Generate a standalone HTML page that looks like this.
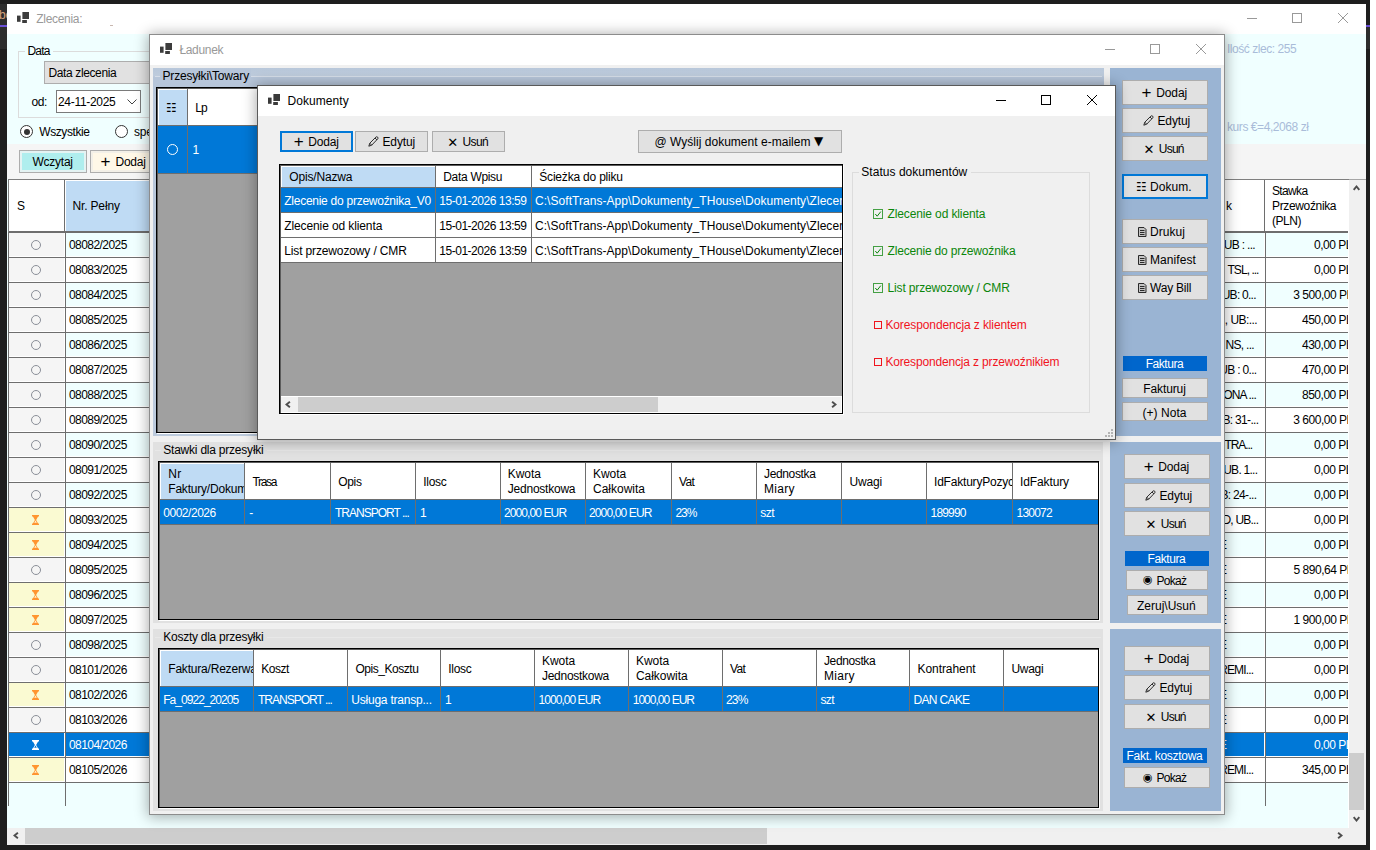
<!DOCTYPE html>
<html lang="pl"><head><meta charset="utf-8"><title>Zlecenia</title>
<style>
*{box-sizing:border-box;margin:0;padding:0}
html,body{width:1376px;height:850px;overflow:hidden;background:#1e1e1e}
body{position:relative;font-family:"Liberation Sans","DejaVu Sans",sans-serif;font-size:12px;color:#000}
.a{position:absolute;white-space:nowrap;overflow:hidden}
.v{position:absolute;white-space:nowrap;overflow:visible}
.win{position:absolute;background:#f0f0f0;overflow:hidden}
.sh{position:absolute;box-shadow:0 1px 13px 1px rgba(0,0,0,.33)}
.tb{position:absolute;left:0;top:0;right:0;height:30px;background:#fff}
.btn{position:absolute;background:#e1e1e1;border:1px solid #adadad;overflow:hidden}
.btn.f{border:2px solid #0078d7}
.lbl{position:absolute;background:#0066cc;color:#fff;overflow:hidden}
.grid{position:absolute;background:#a0a0a0;border:1px solid #000;box-shadow:inset 1px 1px 0 #5c5c5c,1px 1px 0 #fff;overflow:hidden}
.hc{position:absolute;background:#fff;border-right:1px solid #6e6e6e;border-bottom:1px solid #6e6e6e;box-shadow:inset 1px 1px 0 #fff;overflow:hidden}
.hc.s{background:#bfdbf4}
.c{position:absolute;background:#fff;border-right:1px solid #6e6e6e;border-bottom:1px solid #6e6e6e;overflow:hidden}
.z{position:absolute;border-left:1px solid #6e6e6e;border-top:1px solid #6e6e6e;box-shadow:inset -1px -1px 0 #fff;overflow:hidden}
.sel{background:#0078d7;color:#fff}
.ic{font-family:"DejaVu Sans",sans-serif}
svg{position:absolute;overflow:visible}
</style></head>
<body>
<div class="a" style="left:1370px;top:0px;width:6px;height:850px;background:#fff"></div>
<div class="a" style="left:0px;top:4px;width:7px;height:45px;background:#2d2d2d"></div>
<div class="a" style="left:0px;top:25px;width:7px;height:2px;background:#6a4fd6"></div>
<div class="a" style="left:1366px;top:25px;width:4px;height:2px;background:#6a4fd6"></div>
<div class="a" style="left:1366px;top:27px;width:4px;height:22px;background:#2d2d2d"></div>
<div class="a" style="left:-1px;top:7px;height:16px;line-height:16px;letter-spacing:-0.2px;width:8px;color:#d6a27c">bo</div>
<div class="win" style="left:7px;top:4px;width:1359px;height:841px;background:#f0ffff">
<div class="a" style="left:0px;top:0px;width:1359px;height:30px;background:#fff"></div>
<svg style="left:10px;top:8px" width="14" height="13" viewBox="0 0 14 13"><rect x="0" y="3.6" width="3.6" height="6.2" fill="#3c3c3c"/><rect x="5.4" y="0" width="6.6" height="7" fill="#3c3c3c"/><rect x="5.2" y="8" width="4.7" height="3" fill="#3c3c3c"/></svg>
<div class="v" style="left:29.25px;top:7px;height:16px;line-height:16px;letter-spacing:-0.31px;color:#999">Zlecenia:</div>
<div class="a" style="left:103px;top:21px;width:3px;height:1px;background:#c9b8b0"></div>
<svg style="left:1240px;top:8px" width="102" height="12" viewBox="0 0 102 12"><path d="M0 6.5H10" stroke="#999" stroke-width="1" fill="none"/><rect x="45.5" y="1.5" width="9" height="9" stroke="#999" stroke-width="1" fill="none"/><path d="M91 1L101 11M101 1L91 11" stroke="#999" stroke-width="1" fill="none"/></svg>
<div class="a" style="left:0px;top:140px;width:1359px;height:35px;background:#f5f5f5"></div>
<div class="a" style="left:11px;top:47px;width:400px;height:67px;border:1px solid #dcdcdc"></div>
<div class="a" style="left:18px;top:41px;width:28px;height:12px;background:#f0ffff"></div>
<div class="v" style="left:20.5px;top:39px;height:16px;line-height:16px;letter-spacing:-0.83px;">Data</div>
<div class="a" style="left:37px;top:57px;width:300px;height:23px;background:#e1e1e1;border:1px solid #adadad"></div>
<div class="v" style="left:41.5px;top:61px;height:16px;line-height:16px;letter-spacing:-0.38px;">Data zlecenia</div>
<div class="v" style="left:24.5px;top:90px;height:16px;line-height:16px;letter-spacing:-0.38px;">od:</div>
<div class="a" style="left:49px;top:86px;width:85px;height:23px;background:#fff;border:1px solid #7a7a7a"></div>
<div class="v" style="left:51px;top:90px;height:16px;line-height:16px;letter-spacing:-0.31px;">24-11-2025</div>
<svg style="left:120px;top:95px" width="10" height="6" viewBox="0 0 10 6"><path d="M0.5 0.5L5 5L9.5 0.5" stroke="#444" stroke-width="1" fill="none"/></svg>
<div class="a" style="left:13px;top:121px;width:13px;height:13px;border:1px solid #333;border-radius:50%;background:#fff"></div>
<div class="a" style="left:108px;top:121px;width:13px;height:13px;border:1px solid #333;border-radius:50%;background:#fff"></div>
<div class="a" style="left:16.5px;top:124.5px;width:6px;height:6px;background:#333;border-radius:50%"></div>
<div class="v" style="left:32.25px;top:120px;height:16px;line-height:16px;letter-spacing:-0.41px;">Wszystkie</div>
<div class="v" style="left:127px;top:120px;height:16px;line-height:16px;letter-spacing:-0.2px;">specjalne</div>
<div class="a" style="left:12px;top:146px;width:68px;height:23px;background:#afeeee;border:1px solid #adadad;box-shadow:inset 0 0 0 2px #e4f3f3"></div>
<div class="v" style="left:25.5px;top:150px;height:16px;line-height:16px;letter-spacing:-0.25px;">Wczytaj</div>
<div class="a" style="left:83px;top:146px;width:80px;height:23px;background:#fff8e7;border:1px solid #adadad;box-shadow:inset 0 0 0 2px #f3f0e8"></div>
<div class="v" style="left:93.55px;top:147.6px;height:20px;line-height:20px;font-size:17px;color:#000">+</div>
<div class="v" style="left:108.5px;top:150px;height:16px;line-height:16px;letter-spacing:-0.25px;">Dodaj</div>
<div class="v" style="left:1220px;top:37px;height:16px;line-height:16px;letter-spacing:-0.46px;color:#a9bcd9">Ilość zlec: 255</div>
<div class="v" style="left:1220px;top:115px;height:16px;line-height:16px;letter-spacing:-0.43px;color:#a9bcd9">kurs €=4,2068 zł</div>
<div class="a" style="left:1px;top:175px;width:1341px;height:649px;background:#f0ffff;border-top:1px solid #7f7f7f"></div>
<div class="a" style="left:1px;top:175px;width:1px;height:53px;background:#7f7f7f"></div>
<div class="a" style="left:1px;top:175px;width:1341px;height:649px;">
<div class="hc" style="left:1px;top:1px;width:56px;height:52px;"></div>
<div class="v" style="left:9px;top:19px;height:16px;line-height:16px;letter-spacing:-0.2px;">S</div>
<div class="hc s" style="left:57px;top:1px;width:1100px;height:52px;"></div>
<div class="v" style="left:64.5px;top:19px;height:16px;line-height:16px;letter-spacing:-0.16px;">Nr. Pełny</div>
<div class="hc" style="left:1157px;top:1px;width:100px;height:52px;"></div>
<div class="v" style="left:1218px;top:19px;height:16px;line-height:16px;letter-spacing:-0.2px;">k</div>
<div class="hc" style="left:1257px;top:1px;width:120px;height:52px;"></div>
<div class="v" style="left:1264px;top:4px;height:16px;line-height:16px;letter-spacing:-0.65px;">Stawka</div>
<div class="v" style="left:1264px;top:19px;height:16px;line-height:16px;letter-spacing:-0.35px;">Przewoźnika</div>
<div class="v" style="left:1264px;top:34px;height:16px;line-height:16px;letter-spacing:-0.44px;">(PLN)</div>
<div class="z" style="left:0px;top:53px;width:57px;height:25px;background:#f5f5f5"></div>
<div class="a" style="left:23px;top:61px;width:10px;height:10px;border:1px solid #8a8f98;border-radius:50%"></div>
<div class="z" style="left:57px;top:53px;width:1100px;height:25px;background:#f0ffff"></div>
<div class="v" style="left:61px;top:58px;height:16px;line-height:16px;letter-spacing:-0.56px;color:#000">08082/2025</div>
<div class="z" style="left:1157px;top:53px;width:100px;height:25px;background:#f0ffff"></div>
<div class="v" style="left:1215.78px;top:58px;height:16px;line-height:16px;letter-spacing:-0.68px;color:#000">UB : ...</div>
<div class="z" style="left:1257px;top:53px;width:120px;height:25px;background:#f0ffff"></div>
<div class="v" style="left:1306px;top:58px;height:16px;line-height:16px;letter-spacing:-0.5px;color:#000">0,00 PLN</div>
<div class="z" style="left:0px;top:78px;width:57px;height:25px;background:#f5f5f5"></div>
<div class="a" style="left:23px;top:86px;width:10px;height:10px;border:1px solid #8a8f98;border-radius:50%"></div>
<div class="z" style="left:57px;top:78px;width:1100px;height:25px;background:#fff"></div>
<div class="v" style="left:61px;top:83px;height:16px;line-height:16px;letter-spacing:-0.56px;color:#000">08083/2025</div>
<div class="z" style="left:1157px;top:78px;width:100px;height:25px;background:#fff"></div>
<div class="v" style="left:1219.5px;top:83px;height:16px;line-height:16px;letter-spacing:-0.96px;color:#000">TSL, ...</div>
<div class="z" style="left:1257px;top:78px;width:120px;height:25px;background:#fff"></div>
<div class="v" style="left:1306px;top:83px;height:16px;line-height:16px;letter-spacing:-0.5px;color:#000">0,00 PLN</div>
<div class="z" style="left:0px;top:103px;width:57px;height:25px;background:#f5f5f5"></div>
<div class="a" style="left:23px;top:111px;width:10px;height:10px;border:1px solid #8a8f98;border-radius:50%"></div>
<div class="z" style="left:57px;top:103px;width:1100px;height:25px;background:#f0ffff"></div>
<div class="v" style="left:61px;top:108px;height:16px;line-height:16px;letter-spacing:-0.56px;color:#000">08084/2025</div>
<div class="z" style="left:1157px;top:103px;width:100px;height:25px;background:#f0ffff"></div>
<div class="v" style="left:1213.7px;top:108px;height:16px;line-height:16px;letter-spacing:-0.74px;color:#000">UB: 0...</div>
<div class="z" style="left:1257px;top:103px;width:120px;height:25px;background:#f0ffff"></div>
<div class="v" style="left:1285.25px;top:108px;height:16px;line-height:16px;letter-spacing:-0.47px;color:#000">3 500,00 PLN</div>
<div class="z" style="left:0px;top:128px;width:57px;height:25px;background:#f5f5f5"></div>
<div class="a" style="left:23px;top:136px;width:10px;height:10px;border:1px solid #8a8f98;border-radius:50%"></div>
<div class="z" style="left:57px;top:128px;width:1100px;height:25px;background:#fff"></div>
<div class="v" style="left:61px;top:133px;height:16px;line-height:16px;letter-spacing:-0.56px;color:#000">08085/2025</div>
<div class="z" style="left:1157px;top:128px;width:100px;height:25px;background:#fff"></div>
<div class="v" style="left:1216.8px;top:133px;height:16px;line-height:16px;letter-spacing:-0.54px;color:#000">, UB:...</div>
<div class="z" style="left:1257px;top:128px;width:120px;height:25px;background:#fff"></div>
<div class="v" style="left:1294px;top:133px;height:16px;line-height:16px;letter-spacing:-0.49px;color:#000">450,00 PLN</div>
<div class="z" style="left:0px;top:153px;width:57px;height:25px;background:#f5f5f5"></div>
<div class="a" style="left:23px;top:161px;width:10px;height:10px;border:1px solid #8a8f98;border-radius:50%"></div>
<div class="z" style="left:57px;top:153px;width:1100px;height:25px;background:#f0ffff"></div>
<div class="v" style="left:61px;top:158px;height:16px;line-height:16px;letter-spacing:-0.56px;color:#000">08086/2025</div>
<div class="z" style="left:1157px;top:153px;width:100px;height:25px;background:#f0ffff"></div>
<div class="v" style="left:1217.57px;top:158px;height:16px;line-height:16px;letter-spacing:-0.72px;color:#000">NS, ...</div>
<div class="z" style="left:1257px;top:153px;width:120px;height:25px;background:#f0ffff"></div>
<div class="v" style="left:1294px;top:158px;height:16px;line-height:16px;letter-spacing:-0.49px;color:#000">430,00 PLN</div>
<div class="z" style="left:0px;top:178px;width:57px;height:25px;background:#f5f5f5"></div>
<div class="a" style="left:23px;top:186px;width:10px;height:10px;border:1px solid #8a8f98;border-radius:50%"></div>
<div class="z" style="left:57px;top:178px;width:1100px;height:25px;background:#fff"></div>
<div class="v" style="left:61px;top:183px;height:16px;line-height:16px;letter-spacing:-0.56px;color:#000">08087/2025</div>
<div class="z" style="left:1157px;top:178px;width:100px;height:25px;background:#fff"></div>
<div class="v" style="left:1211.37px;top:183px;height:16px;line-height:16px;letter-spacing:-0.7px;color:#000">UB : 0...</div>
<div class="z" style="left:1257px;top:178px;width:120px;height:25px;background:#fff"></div>
<div class="v" style="left:1294px;top:183px;height:16px;line-height:16px;letter-spacing:-0.49px;color:#000">470,00 PLN</div>
<div class="z" style="left:0px;top:203px;width:57px;height:25px;background:#f5f5f5"></div>
<div class="a" style="left:23px;top:211px;width:10px;height:10px;border:1px solid #8a8f98;border-radius:50%"></div>
<div class="z" style="left:57px;top:203px;width:1100px;height:25px;background:#f0ffff"></div>
<div class="v" style="left:61px;top:208px;height:16px;line-height:16px;letter-spacing:-0.56px;color:#000">08088/2025</div>
<div class="z" style="left:1157px;top:203px;width:100px;height:25px;background:#f0ffff"></div>
<div class="v" style="left:1215.29px;top:208px;height:16px;line-height:16px;letter-spacing:-0.84px;color:#000">ONA ...</div>
<div class="z" style="left:1257px;top:203px;width:120px;height:25px;background:#f0ffff"></div>
<div class="v" style="left:1294px;top:208px;height:16px;line-height:16px;letter-spacing:-0.49px;color:#000">850,00 PLN</div>
<div class="z" style="left:0px;top:228px;width:57px;height:25px;background:#f5f5f5"></div>
<div class="a" style="left:23px;top:236px;width:10px;height:10px;border:1px solid #8a8f98;border-radius:50%"></div>
<div class="z" style="left:57px;top:228px;width:1100px;height:25px;background:#fff"></div>
<div class="v" style="left:61px;top:233px;height:16px;line-height:16px;letter-spacing:-0.56px;color:#000">08089/2025</div>
<div class="z" style="left:1157px;top:228px;width:100px;height:25px;background:#fff"></div>
<div class="v" style="left:1214.46px;top:233px;height:16px;line-height:16px;letter-spacing:-0.68px;color:#000">B: 31-...</div>
<div class="z" style="left:1257px;top:228px;width:120px;height:25px;background:#fff"></div>
<div class="v" style="left:1285.25px;top:233px;height:16px;line-height:16px;letter-spacing:-0.47px;color:#000">3 600,00 PLN</div>
<div class="z" style="left:0px;top:253px;width:57px;height:25px;background:#f5f5f5"></div>
<div class="a" style="left:23px;top:261px;width:10px;height:10px;border:1px solid #8a8f98;border-radius:50%"></div>
<div class="z" style="left:57px;top:253px;width:1100px;height:25px;background:#f0ffff"></div>
<div class="v" style="left:61px;top:258px;height:16px;line-height:16px;letter-spacing:-0.56px;color:#000">08090/2025</div>
<div class="z" style="left:1157px;top:253px;width:100px;height:25px;background:#f0ffff"></div>
<div class="v" style="left:1216.5px;top:258px;height:16px;line-height:16px;letter-spacing:-1.1px;color:#000">TRA...</div>
<div class="z" style="left:1257px;top:253px;width:120px;height:25px;background:#f0ffff"></div>
<div class="v" style="left:1306px;top:258px;height:16px;line-height:16px;letter-spacing:-0.5px;color:#000">0,00 PLN</div>
<div class="z" style="left:0px;top:278px;width:57px;height:25px;background:#f5f5f5"></div>
<div class="a" style="left:23px;top:286px;width:10px;height:10px;border:1px solid #8a8f98;border-radius:50%"></div>
<div class="z" style="left:57px;top:278px;width:1100px;height:25px;background:#fff"></div>
<div class="v" style="left:61px;top:283px;height:16px;line-height:16px;letter-spacing:-0.56px;color:#000">08091/2025</div>
<div class="z" style="left:1157px;top:278px;width:100px;height:25px;background:#fff"></div>
<div class="v" style="left:1215.2px;top:283px;height:16px;line-height:16px;letter-spacing:-0.74px;color:#000">UB. 1...</div>
<div class="z" style="left:1257px;top:278px;width:120px;height:25px;background:#fff"></div>
<div class="v" style="left:1306px;top:283px;height:16px;line-height:16px;letter-spacing:-0.5px;color:#000">0,00 PLN</div>
<div class="z" style="left:0px;top:303px;width:57px;height:25px;background:#f5f5f5"></div>
<div class="a" style="left:23px;top:311px;width:10px;height:10px;border:1px solid #8a8f98;border-radius:50%"></div>
<div class="z" style="left:57px;top:303px;width:1100px;height:25px;background:#f0ffff"></div>
<div class="v" style="left:61px;top:308px;height:16px;line-height:16px;letter-spacing:-0.56px;color:#000">08092/2025</div>
<div class="z" style="left:1157px;top:303px;width:100px;height:25px;background:#f0ffff"></div>
<div class="v" style="left:1212.46px;top:308px;height:16px;line-height:16px;letter-spacing:-0.68px;color:#000">B: 24-...</div>
<div class="z" style="left:1257px;top:303px;width:120px;height:25px;background:#f0ffff"></div>
<div class="v" style="left:1306px;top:308px;height:16px;line-height:16px;letter-spacing:-0.5px;color:#000">0,00 PLN</div>
<div class="z" style="left:0px;top:328px;width:57px;height:25px;background:#fafad2"></div>
<svg style="left:24px;top:336px" width="7" height="10" viewBox="0 0 7 10"><path d="M0 0H7V1.4H0Z M0 8.6H7V10H0Z M0.9 1.4H6.1L4.1 5L6.1 8.6H0.9L2.9 5Z" fill="#ff9530"/><path d="M2.2 7.8L3.5 5.6L4.8 7.8Z" fill="#fff4d6"/></svg>
<div class="z" style="left:57px;top:328px;width:1100px;height:25px;background:#fff"></div>
<div class="v" style="left:61px;top:333px;height:16px;line-height:16px;letter-spacing:-0.56px;color:#000">08093/2025</div>
<div class="z" style="left:1157px;top:328px;width:100px;height:25px;background:#fff"></div>
<div class="v" style="left:1214.46px;top:333px;height:16px;line-height:16px;letter-spacing:-0.78px;color:#000">D, UB...</div>
<div class="z" style="left:1257px;top:328px;width:120px;height:25px;background:#fff"></div>
<div class="v" style="left:1306px;top:333px;height:16px;line-height:16px;letter-spacing:-0.5px;color:#000">0,00 PLN</div>
<div class="z" style="left:0px;top:353px;width:57px;height:25px;background:#fafad2"></div>
<svg style="left:24px;top:361px" width="7" height="10" viewBox="0 0 7 10"><path d="M0 0H7V1.4H0Z M0 8.6H7V10H0Z M0.9 1.4H6.1L4.1 5L6.1 8.6H0.9L2.9 5Z" fill="#ff9530"/><path d="M2.2 7.8L3.5 5.6L4.8 7.8Z" fill="#fff4d6"/></svg>
<div class="z" style="left:57px;top:353px;width:1100px;height:25px;background:#f0ffff"></div>
<div class="v" style="left:61px;top:358px;height:16px;line-height:16px;letter-spacing:-0.56px;color:#000">08094/2025</div>
<div class="z" style="left:1157px;top:353px;width:100px;height:25px;background:#f0ffff"></div>
<div class="v" style="left:1211px;top:358px;height:16px;line-height:16px;letter-spacing:-0.2px;color:#000">E</div>
<div class="z" style="left:1257px;top:353px;width:120px;height:25px;background:#f0ffff"></div>
<div class="v" style="left:1306px;top:358px;height:16px;line-height:16px;letter-spacing:-0.5px;color:#000">0,00 PLN</div>
<div class="z" style="left:0px;top:378px;width:57px;height:25px;background:#f5f5f5"></div>
<div class="a" style="left:23px;top:386px;width:10px;height:10px;border:1px solid #8a8f98;border-radius:50%"></div>
<div class="z" style="left:57px;top:378px;width:1100px;height:25px;background:#fff"></div>
<div class="v" style="left:61px;top:383px;height:16px;line-height:16px;letter-spacing:-0.56px;color:#000">08095/2025</div>
<div class="z" style="left:1157px;top:378px;width:100px;height:25px;background:#fff"></div>
<div class="v" style="left:1211px;top:383px;height:16px;line-height:16px;letter-spacing:-0.2px;color:#000">E</div>
<div class="z" style="left:1257px;top:378px;width:120px;height:25px;background:#fff"></div>
<div class="v" style="left:1285.5px;top:383px;height:16px;line-height:16px;letter-spacing:-0.47px;color:#000">5 890,64 PLN</div>
<div class="z" style="left:0px;top:403px;width:57px;height:25px;background:#fafad2"></div>
<svg style="left:24px;top:411px" width="7" height="10" viewBox="0 0 7 10"><path d="M0 0H7V1.4H0Z M0 8.6H7V10H0Z M0.9 1.4H6.1L4.1 5L6.1 8.6H0.9L2.9 5Z" fill="#ff9530"/><path d="M2.2 7.8L3.5 5.6L4.8 7.8Z" fill="#fff4d6"/></svg>
<div class="z" style="left:57px;top:403px;width:1100px;height:25px;background:#f0ffff"></div>
<div class="v" style="left:61px;top:408px;height:16px;line-height:16px;letter-spacing:-0.56px;color:#000">08096/2025</div>
<div class="z" style="left:1157px;top:403px;width:100px;height:25px;background:#f0ffff"></div>
<div class="v" style="left:1211px;top:408px;height:16px;line-height:16px;letter-spacing:-0.2px;color:#000">E</div>
<div class="z" style="left:1257px;top:403px;width:120px;height:25px;background:#f0ffff"></div>
<div class="v" style="left:1306px;top:408px;height:16px;line-height:16px;letter-spacing:-0.5px;color:#000">0,00 PLN</div>
<div class="z" style="left:0px;top:428px;width:57px;height:25px;background:#fafad2"></div>
<svg style="left:24px;top:436px" width="7" height="10" viewBox="0 0 7 10"><path d="M0 0H7V1.4H0Z M0 8.6H7V10H0Z M0.9 1.4H6.1L4.1 5L6.1 8.6H0.9L2.9 5Z" fill="#ff9530"/><path d="M2.2 7.8L3.5 5.6L4.8 7.8Z" fill="#fff4d6"/></svg>
<div class="z" style="left:57px;top:428px;width:1100px;height:25px;background:#fff"></div>
<div class="v" style="left:61px;top:433px;height:16px;line-height:16px;letter-spacing:-0.56px;color:#000">08097/2025</div>
<div class="z" style="left:1157px;top:428px;width:100px;height:25px;background:#fff"></div>
<div class="v" style="left:1211px;top:433px;height:16px;line-height:16px;letter-spacing:-0.2px;color:#000">E</div>
<div class="z" style="left:1257px;top:428px;width:120px;height:25px;background:#fff"></div>
<div class="v" style="left:1285.5px;top:433px;height:16px;line-height:16px;letter-spacing:-0.47px;color:#000">1 900,00 PLN</div>
<div class="z" style="left:0px;top:453px;width:57px;height:25px;background:#f5f5f5"></div>
<div class="a" style="left:23px;top:461px;width:10px;height:10px;border:1px solid #8a8f98;border-radius:50%"></div>
<div class="z" style="left:57px;top:453px;width:1100px;height:25px;background:#f0ffff"></div>
<div class="v" style="left:61px;top:458px;height:16px;line-height:16px;letter-spacing:-0.56px;color:#000">08098/2025</div>
<div class="z" style="left:1157px;top:453px;width:100px;height:25px;background:#f0ffff"></div>
<div class="v" style="left:1211px;top:458px;height:16px;line-height:16px;letter-spacing:-0.2px;color:#000">E</div>
<div class="z" style="left:1257px;top:453px;width:120px;height:25px;background:#f0ffff"></div>
<div class="v" style="left:1306px;top:458px;height:16px;line-height:16px;letter-spacing:-0.5px;color:#000">0,00 PLN</div>
<div class="z" style="left:0px;top:478px;width:57px;height:25px;background:#f5f5f5"></div>
<div class="a" style="left:23px;top:486px;width:10px;height:10px;border:1px solid #8a8f98;border-radius:50%"></div>
<div class="z" style="left:57px;top:478px;width:1100px;height:25px;background:#fff"></div>
<div class="v" style="left:61px;top:483px;height:16px;line-height:16px;letter-spacing:-0.56px;color:#000">08101/2026</div>
<div class="z" style="left:1157px;top:478px;width:100px;height:25px;background:#fff"></div>
<div class="v" style="left:1211.2px;top:483px;height:16px;line-height:16px;letter-spacing:-0.87px;color:#000">REMI...</div>
<div class="z" style="left:1257px;top:478px;width:120px;height:25px;background:#fff"></div>
<div class="v" style="left:1306px;top:483px;height:16px;line-height:16px;letter-spacing:-0.5px;color:#000">0,00 PLN</div>
<div class="z" style="left:0px;top:503px;width:57px;height:25px;background:#fafad2"></div>
<svg style="left:24px;top:511px" width="7" height="10" viewBox="0 0 7 10"><path d="M0 0H7V1.4H0Z M0 8.6H7V10H0Z M0.9 1.4H6.1L4.1 5L6.1 8.6H0.9L2.9 5Z" fill="#ff9530"/><path d="M2.2 7.8L3.5 5.6L4.8 7.8Z" fill="#fff4d6"/></svg>
<div class="z" style="left:57px;top:503px;width:1100px;height:25px;background:#f0ffff"></div>
<div class="v" style="left:61px;top:508px;height:16px;line-height:16px;letter-spacing:-0.56px;color:#000">08102/2026</div>
<div class="z" style="left:1157px;top:503px;width:100px;height:25px;background:#f0ffff"></div>
<div class="v" style="left:1211px;top:508px;height:16px;line-height:16px;letter-spacing:-0.2px;color:#000">E</div>
<div class="z" style="left:1257px;top:503px;width:120px;height:25px;background:#f0ffff"></div>
<div class="v" style="left:1306px;top:508px;height:16px;line-height:16px;letter-spacing:-0.5px;color:#000">0,00 PLN</div>
<div class="z" style="left:0px;top:528px;width:57px;height:25px;background:#f5f5f5"></div>
<div class="a" style="left:23px;top:536px;width:10px;height:10px;border:1px solid #8a8f98;border-radius:50%"></div>
<div class="z" style="left:57px;top:528px;width:1100px;height:25px;background:#fff"></div>
<div class="v" style="left:61px;top:533px;height:16px;line-height:16px;letter-spacing:-0.56px;color:#000">08103/2026</div>
<div class="z" style="left:1157px;top:528px;width:100px;height:25px;background:#fff"></div>
<div class="v" style="left:1211px;top:533px;height:16px;line-height:16px;letter-spacing:-0.2px;color:#000">E</div>
<div class="z" style="left:1257px;top:528px;width:120px;height:25px;background:#fff"></div>
<div class="v" style="left:1306px;top:533px;height:16px;line-height:16px;letter-spacing:-0.5px;color:#000">0,00 PLN</div>
<div class="z" style="left:0px;top:553px;width:57px;height:25px;background:#0078d7"></div>
<svg style="left:24px;top:561px" width="7" height="10" viewBox="0 0 7 10"><path d="M0 0H7V1.4H0Z M0 8.6H7V10H0Z M0.9 1.4H6.1L4.1 5L6.1 8.6H0.9L2.9 5Z" fill="#fff"/><path d="M2.2 7.8L3.5 5.6L4.8 7.8Z" fill="#0078d7"/></svg>
<div class="z" style="left:57px;top:553px;width:1100px;height:25px;background:#0078d7"></div>
<div class="v" style="left:61px;top:558px;height:16px;line-height:16px;letter-spacing:-0.56px;color:#fff">08104/2026</div>
<div class="z" style="left:1157px;top:553px;width:100px;height:25px;background:#0078d7"></div>
<div class="v" style="left:1211px;top:558px;height:16px;line-height:16px;letter-spacing:-0.2px;color:#fff">E</div>
<div class="z" style="left:1257px;top:553px;width:120px;height:25px;background:#0078d7"></div>
<div class="v" style="left:1306px;top:558px;height:16px;line-height:16px;letter-spacing:-0.5px;color:#fff">0,00 PLN</div>
<div class="z" style="left:0px;top:578px;width:57px;height:25px;background:#fafad2"></div>
<svg style="left:24px;top:586px" width="7" height="10" viewBox="0 0 7 10"><path d="M0 0H7V1.4H0Z M0 8.6H7V10H0Z M0.9 1.4H6.1L4.1 5L6.1 8.6H0.9L2.9 5Z" fill="#ff9530"/><path d="M2.2 7.8L3.5 5.6L4.8 7.8Z" fill="#fff4d6"/></svg>
<div class="z" style="left:57px;top:578px;width:1100px;height:25px;background:#fff"></div>
<div class="v" style="left:61px;top:583px;height:16px;line-height:16px;letter-spacing:-0.56px;color:#000">08105/2026</div>
<div class="z" style="left:1157px;top:578px;width:100px;height:25px;background:#fff"></div>
<div class="v" style="left:1211.2px;top:583px;height:16px;line-height:16px;letter-spacing:-0.87px;color:#000">REMI...</div>
<div class="z" style="left:1257px;top:578px;width:120px;height:25px;background:#fff"></div>
<div class="v" style="left:1294px;top:583px;height:16px;line-height:16px;letter-spacing:-0.49px;color:#000">345,00 PLN</div>
<div class="z" style="left:0px;top:603px;width:57px;height:24px;background:#f0ffff;box-shadow:none"></div>
<div class="z" style="left:57px;top:603px;width:1100px;height:24px;background:#f0ffff;box-shadow:none"></div>
<div class="z" style="left:1157px;top:603px;width:100px;height:24px;background:#f0ffff;box-shadow:none"></div>
<div class="z" style="left:1257px;top:603px;width:120px;height:24px;background:#f0ffff;box-shadow:none"></div>
<div class="a" style="left:1340px;top:1px;width:1px;height:648px;background:#fff"></div>
</div>
<div class="a" style="left:1342px;top:175px;width:17px;height:649px;background:#f0f0f0"></div>
<div class="a" style="left:1342px;top:175px;width:17px;height:1px;background:#a6a6a6"></div>
<div class="a" style="left:1342px;top:749px;width:15px;height:57px;background:#cdcdcd"></div>
<svg style="left:1346px;top:181px" width="7" height="6" viewBox="0 0 7 6"><path d="M0.7 4.9L3.5 1.5L6.3 4.9" stroke="#4d4d4d" stroke-width="1.9" fill="none"/></svg>
<svg style="left:1346px;top:812px" width="7" height="6" viewBox="0 0 7 6"><path d="M0.7 1.1L3.5 4.5L6.3 1.1" stroke="#4d4d4d" stroke-width="1.9" fill="none"/></svg>
<div class="a" style="left:0px;top:824px;width:1359px;height:17px;background:#f0f0f0"></div>
<div class="a" style="left:18px;top:824px;width:742px;height:16px;background:#cdcdcd"></div>
<svg style="left:6px;top:828px" width="6" height="7" viewBox="0 0 6 7"><path d="M4.9 0.7L1.5 3.5L4.9 6.3" stroke="#4d4d4d" stroke-width="1.9" fill="none"/></svg>
<svg style="left:1330px;top:828px" width="6" height="7" viewBox="0 0 6 7"><path d="M1.1 0.7L4.5 3.5L1.1 6.3" stroke="#4d4d4d" stroke-width="1.9" fill="none"/></svg>
</div>
<div class="sh" style="left:149px;top:34px;width:1076px;height:781px;"></div>
<div class="win" style="left:149px;top:34px;width:1076px;height:781px;border:1px solid #8c8c8c">
<div class="a" style="left:0px;top:0px;width:1074px;height:30px;background:#fff"></div>
<svg style="left:10px;top:8px" width="14" height="13" viewBox="0 0 14 13"><rect x="0" y="3.6" width="3.6" height="6.2" fill="#3c3c3c"/><rect x="5.4" y="0" width="6.6" height="7" fill="#3c3c3c"/><rect x="5.2" y="8" width="4.7" height="3" fill="#3c3c3c"/></svg>
<div class="v" style="left:29.4px;top:7px;height:16px;line-height:16px;letter-spacing:-0.32px;color:#999">Ładunek</div>
<svg style="left:955px;top:8px" width="102" height="12" viewBox="0 0 102 12"><path d="M0 6.5H10" stroke="#999" stroke-width="1" fill="none"/><rect x="45.5" y="1.5" width="9" height="9" stroke="#999" stroke-width="1" fill="none"/><path d="M91 1L101 11M101 1L91 11" stroke="#999" stroke-width="1" fill="none"/></svg>
<div class="a" style="left:3px;top:33px;width:951px;height:368px;background:linear-gradient(#b8c7da,#becbdc 8px,#b6c5d9 9px,#bccadc)"></div>
<div class="a" style="left:5px;top:41px;width:947px;height:1px;background:#d5dde8"></div>
<div class="a" style="left:10px;top:34px;width:91px;height:14px;background:#b7c6da"></div>
<div class="v" style="left:12.5px;top:33px;height:16px;line-height:16px;letter-spacing:-0.18px;">Przesyłki\Towary</div>
<div class="grid" style="left:6px;top:52px;width:946px;height:346px;">
<div class="hc s" style="left:1px;top:1px;width:30px;height:37px;"></div>
<div class="v ic" style="left:9px;top:11.5px;height:16px;line-height:16px;font-size:12px;color:#000">☷</div>
<div class="hc" style="left:31px;top:1px;width:400px;height:37px;"></div>
<div class="v" style="left:38.25px;top:12px;height:16px;line-height:16px;letter-spacing:-1px;">Lp</div>
<div class="c sel" style="left:1px;top:38px;width:30px;height:48px;"></div>
<div class="a" style="left:10px;top:56px;width:11px;height:11px;border:1px solid #fff;border-radius:50%"></div>
<div class="c sel" style="left:31px;top:38px;width:400px;height:48px;"></div>
<div class="v" style="left:35.5px;top:54px;height:16px;line-height:16px;letter-spacing:-0.2px;color:#fff">1</div>
</div>
<div class="a" style="left:960px;top:33px;width:111px;height:368px;background:#9ab4d3"></div>
<div class="a" style="left:960px;top:407px;width:111px;height:181px;background:#9ab4d3"></div>
<div class="a" style="left:960px;top:594px;width:111px;height:182px;background:#9ab4d3"></div>
<div class="btn" style="left:972px;top:45px;width:86px;height:25px;"></div>
<div class="v" style="left:991.55px;top:47.5px;height:20px;line-height:20px;font-size:17px;color:#000">+</div>
<div class="v" style="left:1006.25px;top:50px;height:16px;line-height:16px;letter-spacing:-0.12px;">Dodaj</div>
<div class="btn" style="left:972px;top:73px;width:86px;height:25px;"></div>
<svg style="left:992.75px;top:80.4px" width="11" height="11" viewBox="0 0 11 11"><path d="M0.8 10.2L1.8 7.2L7.9 1.1Q8.8 0.3 9.7 1.2Q10.5 2.1 9.7 2.9L3.7 9.2Z M1.8 7.2L3.7 9.2 M7 2L8.9 3.9" fill="none" stroke="#1a1a1a" stroke-width="0.9"/></svg>
<div class="v" style="left:1007.5px;top:78px;height:16px;line-height:16px;letter-spacing:-0.15px;">Edytuj</div>
<div class="btn" style="left:972px;top:101px;width:86px;height:25px;"></div>
<div class="v ic" style="left:993.5px;top:106.6px;height:16px;line-height:16px;font-size:13px">✕</div>
<div class="v" style="left:1008.75px;top:106px;height:16px;line-height:16px;letter-spacing:-0.75px;">Usuń</div>
<div class="btn f" style="left:972px;top:139px;width:86px;height:25px;"></div>
<div class="v ic" style="left:986px;top:143.7px;height:16px;line-height:16px;font-size:12px;color:#000">☷</div>
<div class="v" style="left:1000px;top:144px;height:16px;line-height:16px;letter-spacing:0.05px;">Dokum.</div>
<div class="btn" style="left:972px;top:184px;width:86px;height:25px;"></div>
<svg style="left:988px;top:191.9px" width="9" height="10" viewBox="0 0 9 10"><path d="M0.5 0.5H6L8 2.5V9.5H0.5Z" fill="#c4c4c4" stroke="#2a2a2a" stroke-width="1"/><path d="M2 3.5H6.5M2 5.5H6.5M2 7.5H6.5" stroke="#2a2a2a" stroke-width="1"/></svg>
<div class="v" style="left:1000px;top:189px;height:16px;line-height:16px;letter-spacing:0.05px;">Drukuj</div>
<div class="btn" style="left:972px;top:212px;width:86px;height:25px;"></div>
<svg style="left:988px;top:219.9px" width="9" height="10" viewBox="0 0 9 10"><path d="M0.5 0.5H6L8 2.5V9.5H0.5Z" fill="#c4c4c4" stroke="#2a2a2a" stroke-width="1"/><path d="M2 3.5H6.5M2 5.5H6.5M2 7.5H6.5" stroke="#2a2a2a" stroke-width="1"/></svg>
<div class="v" style="left:1000px;top:217px;height:16px;line-height:16px;letter-spacing:0.07px;">Manifest</div>
<div class="btn" style="left:972px;top:240px;width:86px;height:25px;"></div>
<svg style="left:988px;top:247.9px" width="9" height="10" viewBox="0 0 9 10"><path d="M0.5 0.5H6L8 2.5V9.5H0.5Z" fill="#c4c4c4" stroke="#2a2a2a" stroke-width="1"/><path d="M2 3.5H6.5M2 5.5H6.5M2 7.5H6.5" stroke="#2a2a2a" stroke-width="1"/></svg>
<div class="v" style="left:1000px;top:245px;height:16px;line-height:16px;letter-spacing:-0.21px;">Way Bill</div>
<div class="lbl" style="left:973px;top:321px;width:84px;height:15px;"></div>
<div class="v" style="left:995.75px;top:321px;height:16px;line-height:16px;letter-spacing:-0.46px;color:#fff">Faktura</div>
<div class="btn" style="left:972px;top:343px;width:86px;height:20px;"></div>
<div class="v" style="left:993.25px;top:346px;height:16px;line-height:16px;letter-spacing:-0.11px;">Fakturuj</div>
<div class="btn" style="left:972px;top:367px;width:86px;height:19px;"></div>
<div class="v" style="left:992.5px;top:370px;height:16px;line-height:16px;letter-spacing:0.04px;">(+) Nota</div>
<div class="btn" style="left:974px;top:419px;width:86px;height:25px;"></div>
<div class="v" style="left:993.8px;top:421.5px;height:20px;line-height:20px;font-size:17px;color:#000">+</div>
<div class="v" style="left:1008.25px;top:424px;height:16px;line-height:16px;letter-spacing:-0.12px;">Dodaj</div>
<div class="btn" style="left:974px;top:448px;width:86px;height:25px;"></div>
<svg style="left:995px;top:455.4px" width="11" height="11" viewBox="0 0 11 11"><path d="M0.8 10.2L1.8 7.2L7.9 1.1Q8.8 0.3 9.7 1.2Q10.5 2.1 9.7 2.9L3.7 9.2Z M1.8 7.2L3.7 9.2 M7 2L8.9 3.9" fill="none" stroke="#1a1a1a" stroke-width="0.9"/></svg>
<div class="v" style="left:1009.5px;top:453px;height:16px;line-height:16px;letter-spacing:-0.15px;">Edytuj</div>
<div class="btn" style="left:974px;top:476px;width:86px;height:25px;"></div>
<div class="v ic" style="left:995.5px;top:481.6px;height:16px;line-height:16px;font-size:13px">✕</div>
<div class="v" style="left:1010.75px;top:481px;height:16px;line-height:16px;letter-spacing:-0.75px;">Usuń</div>
<div class="lbl" style="left:975px;top:516px;width:84px;height:15px;"></div>
<div class="v" style="left:997.5px;top:516px;height:16px;line-height:16px;letter-spacing:-0.42px;color:#fff">Faktura</div>
<div class="btn" style="left:976px;top:535px;width:82px;height:20px;"></div>
<div class="v ic" style="left:992.95px;top:537px;height:16px;line-height:16px;font-size:11px">◉</div>
<div class="v" style="left:1006.5px;top:538px;height:16px;line-height:16px;letter-spacing:-0.69px;">Pokaż</div>
<div class="btn" style="left:977px;top:560px;width:81px;height:20px;"></div>
<div class="v" style="left:987px;top:563px;height:16px;line-height:16px;letter-spacing:0px;">Zeruj\Usuń</div>
<div class="btn" style="left:974px;top:611px;width:86px;height:25px;"></div>
<div class="v" style="left:993.8px;top:613.5px;height:20px;line-height:20px;font-size:17px;color:#000">+</div>
<div class="v" style="left:1008.25px;top:616px;height:16px;line-height:16px;letter-spacing:-0.12px;">Dodaj</div>
<div class="btn" style="left:974px;top:640px;width:86px;height:25px;"></div>
<svg style="left:995px;top:647.4px" width="11" height="11" viewBox="0 0 11 11"><path d="M0.8 10.2L1.8 7.2L7.9 1.1Q8.8 0.3 9.7 1.2Q10.5 2.1 9.7 2.9L3.7 9.2Z M1.8 7.2L3.7 9.2 M7 2L8.9 3.9" fill="none" stroke="#1a1a1a" stroke-width="0.9"/></svg>
<div class="v" style="left:1009.5px;top:645px;height:16px;line-height:16px;letter-spacing:-0.15px;">Edytuj</div>
<div class="btn" style="left:974px;top:669px;width:86px;height:25px;"></div>
<div class="v ic" style="left:995.5px;top:674.6px;height:16px;line-height:16px;font-size:13px">✕</div>
<div class="v" style="left:1010.75px;top:674px;height:16px;line-height:16px;letter-spacing:-0.75px;">Usuń</div>
<div class="lbl" style="left:973px;top:713px;width:84px;height:15px;"></div>
<div class="v" style="left:976.5px;top:713px;height:16px;line-height:16px;letter-spacing:-0.29px;color:#fff">Fakt. kosztowa</div>
<div class="btn" style="left:974px;top:732px;width:86px;height:21px;"></div>
<div class="v ic" style="left:992.95px;top:734.5px;height:16px;line-height:16px;font-size:11px">◉</div>
<div class="v" style="left:1006.5px;top:735px;height:16px;line-height:16px;letter-spacing:-0.69px;">Pokaż</div>
<div class="a" style="left:3px;top:407px;width:950px;height:181px;background:#e1e1e1"></div>
<div class="a" style="left:5px;top:415px;width:946px;height:1px;background:#e8e8e8"></div>
<div class="a" style="left:11px;top:408px;width:105.5px;height:14px;background:#e1e1e1"></div>
<div class="v" style="left:13.25px;top:407px;height:16px;line-height:16px;letter-spacing:-0.22px;">Stawki dla przesyłki</div>
<div class="grid" style="left:8px;top:426px;width:941px;height:159px;">
<div class="hc s" style="left:1px;top:1px;width:85px;height:37px;"></div>
<div class="a" style="left:1px;top:1px;width:84px;height:36px;">
<div class="v" style="left:8.25px;top:3px;height:16px;line-height:16px;letter-spacing:0.25px;">Nr</div>
<div class="v" style="left:8.25px;top:18px;height:16px;line-height:16px;letter-spacing:-0.2px;">Faktury/Dokum</div>
</div>
<div class="c sel" style="left:1px;top:38px;width:85px;height:25px;"></div>
<div class="a" style="left:1px;top:38px;width:84px;height:24px;">
<div class="v" style="left:3.25px;top:5px;height:16px;line-height:16px;letter-spacing:-0.47px;color:#fff">0002/2026</div>
</div>
<div class="hc" style="left:86px;top:1px;width:86px;height:37px;"></div>
<div class="a" style="left:86px;top:1px;width:85px;height:36px;">
<div class="v" style="left:7.5px;top:11px;height:16px;line-height:16px;letter-spacing:-1.31px;">Trasa</div>
</div>
<div class="c sel" style="left:86px;top:38px;width:86px;height:25px;"></div>
<div class="a" style="left:86px;top:38px;width:85px;height:24px;">
<div class="v" style="left:4.25px;top:5px;height:16px;line-height:16px;letter-spacing:-0.2px;color:#fff">-</div>
</div>
<div class="hc" style="left:172px;top:1px;width:85px;height:37px;"></div>
<div class="a" style="left:172px;top:1px;width:84px;height:36px;">
<div class="v" style="left:7.25px;top:11px;height:16px;line-height:16px;letter-spacing:-0.33px;">Opis</div>
</div>
<div class="c sel" style="left:172px;top:38px;width:85px;height:25px;"></div>
<div class="a" style="left:172px;top:38px;width:84px;height:24px;">
<div class="v" style="left:4px;top:5px;height:16px;line-height:16px;letter-spacing:-1px;color:#fff">TRANSPORT ...</div>
</div>
<div class="hc" style="left:257px;top:1px;width:85px;height:37px;"></div>
<div class="a" style="left:257px;top:1px;width:84px;height:36px;">
<div class="v" style="left:7.25px;top:11px;height:16px;line-height:16px;letter-spacing:-0.31px;">Ilosc</div>
</div>
<div class="c sel" style="left:257px;top:38px;width:85px;height:25px;"></div>
<div class="a" style="left:257px;top:38px;width:84px;height:24px;">
<div class="v" style="left:4px;top:5px;height:16px;line-height:16px;letter-spacing:-0.2px;color:#fff">1</div>
</div>
<div class="hc" style="left:342px;top:1px;width:85px;height:37px;"></div>
<div class="a" style="left:342px;top:1px;width:84px;height:36px;">
<div class="v" style="left:6.8px;top:3px;height:16px;line-height:16px;letter-spacing:-0.08px;">Kwota</div>
<div class="v" style="left:6.8px;top:18px;height:16px;line-height:16px;letter-spacing:-0.23px;">Jednostkowa</div>
</div>
<div class="c sel" style="left:342px;top:38px;width:85px;height:25px;"></div>
<div class="a" style="left:342px;top:38px;width:84px;height:24px;">
<div class="v" style="left:3px;top:5px;height:16px;line-height:16px;letter-spacing:-0.9px;color:#fff">2000,00 EUR</div>
</div>
<div class="hc" style="left:427px;top:1px;width:86px;height:37px;"></div>
<div class="a" style="left:427px;top:1px;width:85px;height:36px;">
<div class="v" style="left:7px;top:3px;height:16px;line-height:16px;letter-spacing:-0.07px;">Kwota</div>
<div class="v" style="left:7px;top:18px;height:16px;line-height:16px;letter-spacing:0px;">Całkowita</div>
</div>
<div class="c sel" style="left:427px;top:38px;width:86px;height:25px;"></div>
<div class="a" style="left:427px;top:38px;width:85px;height:24px;">
<div class="v" style="left:3px;top:5px;height:16px;line-height:16px;letter-spacing:-0.87px;color:#fff">2000,00 EUR</div>
</div>
<div class="hc" style="left:513px;top:1px;width:85px;height:37px;"></div>
<div class="a" style="left:513px;top:1px;width:84px;height:36px;">
<div class="v" style="left:7px;top:11px;height:16px;line-height:16px;letter-spacing:-0.62px;">Vat</div>
</div>
<div class="c sel" style="left:513px;top:38px;width:85px;height:25px;"></div>
<div class="a" style="left:513px;top:38px;width:84px;height:24px;">
<div class="v" style="left:3.4px;top:5px;height:16px;line-height:16px;letter-spacing:-0.95px;color:#fff">23%</div>
</div>
<div class="hc" style="left:598px;top:1px;width:85px;height:37px;"></div>
<div class="a" style="left:598px;top:1px;width:84px;height:36px;">
<div class="v" style="left:7px;top:3px;height:16px;line-height:16px;letter-spacing:-0.36px;">Jednostka</div>
<div class="v" style="left:7px;top:18px;height:16px;line-height:16px;letter-spacing:0.29px;">Miary</div>
</div>
<div class="c sel" style="left:598px;top:38px;width:85px;height:25px;"></div>
<div class="a" style="left:598px;top:38px;width:84px;height:24px;">
<div class="v" style="left:3.3px;top:5px;height:16px;line-height:16px;letter-spacing:-0.57px;color:#fff">szt</div>
</div>
<div class="hc" style="left:683px;top:1px;width:85px;height:37px;"></div>
<div class="a" style="left:683px;top:1px;width:84px;height:36px;">
<div class="v" style="left:7.6px;top:11px;height:16px;line-height:16px;letter-spacing:-0.21px;">Uwagi</div>
</div>
<div class="c sel" style="left:683px;top:38px;width:85px;height:25px;"></div>
<div class="hc" style="left:768px;top:1px;width:86px;height:37px;"></div>
<div class="a" style="left:768px;top:1px;width:85px;height:36px;">
<div class="v" style="left:7px;top:11px;height:16px;line-height:16px;letter-spacing:-0.2px;">IdFakturyPozycji</div>
</div>
<div class="c sel" style="left:768px;top:38px;width:86px;height:25px;"></div>
<div class="a" style="left:768px;top:38px;width:85px;height:24px;">
<div class="v" style="left:3.6px;top:5px;height:16px;line-height:16px;letter-spacing:-0.84px;color:#fff">189990</div>
</div>
<div class="hc" style="left:854px;top:1px;width:86px;height:37px;"></div>
<div class="a" style="left:854px;top:1px;width:85px;height:36px;">
<div class="v" style="left:7px;top:11px;height:16px;line-height:16px;letter-spacing:-0.12px;">IdFaktury</div>
</div>
<div class="c sel" style="left:854px;top:38px;width:86px;height:25px;"></div>
<div class="a" style="left:854px;top:38px;width:85px;height:24px;">
<div class="v" style="left:3.5px;top:5px;height:16px;line-height:16px;letter-spacing:-0.78px;color:#fff">130072</div>
</div>
</div>
<div class="a" style="left:3px;top:594px;width:950px;height:182px;background:#e1e1e1"></div>
<div class="a" style="left:5px;top:602px;width:946px;height:1px;background:#e8e8e8"></div>
<div class="a" style="left:11px;top:595px;width:105.5px;height:14px;background:#e1e1e1"></div>
<div class="v" style="left:13.25px;top:594px;height:16px;line-height:16px;letter-spacing:-0.26px;">Koszty dla przesyłki</div>
<div class="grid" style="left:8px;top:613px;width:941px;height:160px;">
<div class="hc s" style="left:1px;top:1px;width:94px;height:37px;"></div>
<div class="a" style="left:1px;top:1px;width:93px;height:36px;">
<div class="v" style="left:8.25px;top:11px;height:16px;line-height:16px;letter-spacing:-0.2px;">Faktura/Rezerwacja</div>
</div>
<div class="c sel" style="left:1px;top:38px;width:94px;height:25px;"></div>
<div class="a" style="left:1px;top:38px;width:93px;height:24px;">
<div class="v" style="left:3.25px;top:5px;height:16px;line-height:16px;letter-spacing:-0.96px;color:#fff">Fa_0922_20205</div>
</div>
<div class="hc" style="left:95px;top:1px;width:94px;height:37px;"></div>
<div class="a" style="left:95px;top:1px;width:93px;height:36px;">
<div class="v" style="left:7.25px;top:11px;height:16px;line-height:16px;letter-spacing:-0.5px;">Koszt</div>
</div>
<div class="c sel" style="left:95px;top:38px;width:94px;height:25px;"></div>
<div class="a" style="left:95px;top:38px;width:93px;height:24px;">
<div class="v" style="left:4px;top:5px;height:16px;line-height:16px;letter-spacing:-1px;color:#fff">TRANSPORT ...</div>
</div>
<div class="hc" style="left:189px;top:1px;width:93px;height:37px;"></div>
<div class="a" style="left:189px;top:1px;width:92px;height:36px;">
<div class="v" style="left:7.5px;top:11px;height:16px;line-height:16px;letter-spacing:-0.47px;">Opis_Kosztu</div>
</div>
<div class="c sel" style="left:189px;top:38px;width:93px;height:25px;"></div>
<div class="a" style="left:189px;top:38px;width:92px;height:24px;">
<div class="v" style="left:3.25px;top:5px;height:16px;line-height:16px;letter-spacing:-0.22px;color:#fff">Usługa transp...</div>
</div>
<div class="hc" style="left:282px;top:1px;width:94px;height:37px;"></div>
<div class="a" style="left:282px;top:1px;width:93px;height:36px;">
<div class="v" style="left:7.25px;top:11px;height:16px;line-height:16px;letter-spacing:-0.31px;">Ilosc</div>
</div>
<div class="c sel" style="left:282px;top:38px;width:94px;height:25px;"></div>
<div class="a" style="left:282px;top:38px;width:93px;height:24px;">
<div class="v" style="left:4px;top:5px;height:16px;line-height:16px;letter-spacing:-0.2px;color:#fff">1</div>
</div>
<div class="hc" style="left:376px;top:1px;width:94px;height:37px;"></div>
<div class="a" style="left:376px;top:1px;width:93px;height:36px;">
<div class="v" style="left:7px;top:3px;height:16px;line-height:16px;letter-spacing:-0.07px;">Kwota</div>
<div class="v" style="left:7px;top:18px;height:16px;line-height:16px;letter-spacing:-0.28px;">Jednostkowa</div>
</div>
<div class="c sel" style="left:376px;top:38px;width:94px;height:25px;"></div>
<div class="a" style="left:376px;top:38px;width:93px;height:24px;">
<div class="v" style="left:3.5px;top:5px;height:16px;line-height:16px;letter-spacing:-0.95px;color:#fff">1000,00 EUR</div>
</div>
<div class="hc" style="left:470px;top:1px;width:94px;height:37px;"></div>
<div class="a" style="left:470px;top:1px;width:93px;height:36px;">
<div class="v" style="left:7px;top:3px;height:16px;line-height:16px;letter-spacing:-0.07px;">Kwota</div>
<div class="v" style="left:7px;top:18px;height:16px;line-height:16px;letter-spacing:-0.05px;">Całkowita</div>
</div>
<div class="c sel" style="left:470px;top:38px;width:94px;height:25px;"></div>
<div class="a" style="left:470px;top:38px;width:93px;height:24px;">
<div class="v" style="left:3.7px;top:5px;height:16px;line-height:16px;letter-spacing:-0.97px;color:#fff">1000,00 EUR</div>
</div>
<div class="hc" style="left:564px;top:1px;width:94px;height:37px;"></div>
<div class="a" style="left:564px;top:1px;width:93px;height:36px;">
<div class="v" style="left:7px;top:11px;height:16px;line-height:16px;letter-spacing:-0.62px;">Vat</div>
</div>
<div class="c sel" style="left:564px;top:38px;width:94px;height:25px;"></div>
<div class="a" style="left:564px;top:38px;width:93px;height:24px;">
<div class="v" style="left:3px;top:5px;height:16px;line-height:16px;letter-spacing:-0.8px;color:#fff">23%</div>
</div>
<div class="hc" style="left:658px;top:1px;width:93px;height:37px;"></div>
<div class="a" style="left:658px;top:1px;width:92px;height:36px;">
<div class="v" style="left:7px;top:3px;height:16px;line-height:16px;letter-spacing:-0.38px;">Jednostka</div>
<div class="v" style="left:7px;top:18px;height:16px;line-height:16px;letter-spacing:0.29px;">Miary</div>
</div>
<div class="c sel" style="left:658px;top:38px;width:93px;height:25px;"></div>
<div class="a" style="left:658px;top:38px;width:92px;height:24px;">
<div class="v" style="left:3.4px;top:5px;height:16px;line-height:16px;letter-spacing:-0.62px;color:#fff">szt</div>
</div>
<div class="hc" style="left:751px;top:1px;width:94px;height:37px;"></div>
<div class="a" style="left:751px;top:1px;width:93px;height:36px;">
<div class="v" style="left:7.5px;top:11px;height:16px;line-height:16px;letter-spacing:-0.07px;">Kontrahent</div>
</div>
<div class="c sel" style="left:751px;top:38px;width:94px;height:25px;"></div>
<div class="a" style="left:751px;top:38px;width:93px;height:24px;">
<div class="v" style="left:3.5px;top:5px;height:16px;line-height:16px;letter-spacing:-0.68px;color:#fff">DAN CAKE</div>
</div>
<div class="hc" style="left:845px;top:1px;width:95px;height:37px;"></div>
<div class="a" style="left:845px;top:1px;width:94px;height:36px;">
<div class="v" style="left:7.4px;top:11px;height:16px;line-height:16px;letter-spacing:-0.29px;">Uwagi</div>
</div>
<div class="c sel" style="left:845px;top:38px;width:95px;height:25px;"></div>
</div>
</div>
<div class="sh" style="left:257px;top:85px;width:859px;height:355px;"></div>
<div class="win" style="left:257px;top:85px;width:859px;height:355px;border:1px solid #5a5a5a">
<div class="a" style="left:0px;top:0px;width:857px;height:30px;background:#fff"></div>
<svg style="left:10px;top:8px" width="14" height="13" viewBox="0 0 14 13"><rect x="0" y="3.6" width="3.6" height="6.2" fill="#3a3a3a"/><rect x="5.4" y="0" width="6.6" height="7" fill="#3a3a3a"/><rect x="5.2" y="8" width="4.7" height="3" fill="#3a3a3a"/></svg>
<div class="v" style="left:29.5px;top:7px;height:16px;line-height:16px;letter-spacing:0.06px;">Dokumenty</div>
<svg style="left:738px;top:8px" width="102" height="12" viewBox="0 0 102 12"><path d="M0 6.5H10" stroke="#000" stroke-width="1" fill="none"/><rect x="45.5" y="1.5" width="9" height="9" stroke="#000" stroke-width="1" fill="none"/><path d="M91 1L101 11M101 1L91 11" stroke="#000" stroke-width="1" fill="none"/></svg>
<div class="btn f" style="left:22px;top:45px;width:73px;height:21px;"></div>
<div class="v" style="left:35.8px;top:45.5px;height:20px;line-height:20px;font-size:17px;color:#000">+</div>
<div class="v" style="left:50.25px;top:48px;height:16px;line-height:16px;letter-spacing:-0.19px;">Dodaj</div>
<div class="btn" style="left:97px;top:45px;width:73px;height:21px;"></div>
<svg style="left:110px;top:50.4px" width="11" height="11" viewBox="0 0 11 11"><path d="M0.8 10.2L1.8 7.2L7.9 1.1Q8.8 0.3 9.7 1.2Q10.5 2.1 9.7 2.9L3.7 9.2Z M1.8 7.2L3.7 9.2 M7 2L8.9 3.9" fill="none" stroke="#1a1a1a" stroke-width="0.9"/></svg>
<div class="v" style="left:124.5px;top:48px;height:16px;line-height:16px;letter-spacing:-0.15px;">Edytuj</div>
<div class="btn" style="left:174px;top:45px;width:73px;height:21px;"></div>
<div class="v ic" style="left:189.25px;top:48.6px;height:16px;line-height:16px;font-size:13px">✕</div>
<div class="v" style="left:204.5px;top:48px;height:16px;line-height:16px;letter-spacing:-0.58px;">Usuń</div>
<div class="btn" style="left:380px;top:44px;width:204px;height:23px;"></div>
<div class="v" style="left:396.5px;top:48px;height:16px;line-height:16px;letter-spacing:0.02px;">@ Wyślij dokument e-mailem</div>
<div class="v ic" style="left:556px;top:47px;height:16px;line-height:16px;font-size:12px">▼</div>
<div class="grid" style="left:21px;top:78px;width:564px;height:250px;">
<div class="hc s" style="left:1px;top:1px;width:155px;height:22px;"></div>
<div class="v" style="left:9.25px;top:4px;height:16px;line-height:16px;letter-spacing:-0.17px;">Opis/Nazwa</div>
<div class="c sel" style="left:1px;top:23px;width:155px;height:25px;"></div>
<div class="v" style="left:4.25px;top:28px;height:16px;line-height:16px;letter-spacing:-0.26px;color:#fff">Zlecenie do przewoźnika_V0</div>
<div class="c" style="left:1px;top:48px;width:155px;height:25px;"></div>
<div class="v" style="left:4.25px;top:53px;height:16px;line-height:16px;letter-spacing:-0.11px;">Zlecenie od klienta</div>
<div class="c" style="left:1px;top:73px;width:155px;height:25px;"></div>
<div class="v" style="left:4.25px;top:78px;height:16px;line-height:16px;letter-spacing:-0.14px;">List przewozowy / CMR</div>
<div class="hc" style="left:156px;top:1px;width:96px;height:22px;"></div>
<div class="v" style="left:163.25px;top:4px;height:16px;line-height:16px;letter-spacing:-0.31px;">Data Wpisu</div>
<div class="c sel" style="left:156px;top:23px;width:96px;height:25px;"></div>
<div class="v" style="left:159.25px;top:28px;height:16px;line-height:16px;letter-spacing:-0.47px;color:#fff">15-01-2026 13:59</div>
<div class="c" style="left:156px;top:48px;width:96px;height:25px;"></div>
<div class="v" style="left:159.25px;top:53px;height:16px;line-height:16px;letter-spacing:-0.47px;">15-01-2026 13:59</div>
<div class="c" style="left:156px;top:73px;width:96px;height:25px;"></div>
<div class="v" style="left:159.25px;top:78px;height:16px;line-height:16px;letter-spacing:-0.47px;">15-01-2026 13:59</div>
<div class="hc" style="left:252px;top:1px;width:369px;height:22px;"></div>
<div class="v" style="left:259.3px;top:4px;height:16px;line-height:16px;letter-spacing:-0.2px;">Ścieżka do pliku</div>
<div class="c sel" style="left:252px;top:23px;width:369px;height:25px;"></div>
<div class="v" style="left:255px;top:28px;height:16px;line-height:16px;letter-spacing:0.05px;color:#fff">C:\SoftTrans-App\Dokumenty_THouse\Dokumenty\Zlecenie</div>
<div class="c" style="left:252px;top:48px;width:369px;height:25px;"></div>
<div class="v" style="left:255px;top:53px;height:16px;line-height:16px;letter-spacing:0.05px;">C:\SoftTrans-App\Dokumenty_THouse\Dokumenty\Zlecenie</div>
<div class="c" style="left:252px;top:73px;width:369px;height:25px;"></div>
<div class="v" style="left:255px;top:78px;height:16px;line-height:16px;letter-spacing:0.05px;">C:\SoftTrans-App\Dokumenty_THouse\Dokumenty\Zlecenie</div>
<div class="a" style="left:1px;top:231px;width:561px;height:17px;background:#f0f0f0;border:solid #fff;border-width:1px 1px 1px 0"></div>
<div class="a" style="left:18px;top:232px;width:360px;height:15px;background:#cdcdcd"></div>
<svg style="left:5px;top:236px" width="6" height="7" viewBox="0 0 6 7"><path d="M4.9 0.7L1.5 3.5L4.9 6.3" stroke="#4d4d4d" stroke-width="1.9" fill="none"/></svg>
<svg style="left:551px;top:236px" width="6" height="7" viewBox="0 0 6 7"><path d="M1.1 0.7L4.5 3.5L1.1 6.3" stroke="#4d4d4d" stroke-width="1.9" fill="none"/></svg>
</div>
<div class="a" style="left:594px;top:86px;width:238px;height:241px;border:1px solid #dcdcdc"></div>
<div class="a" style="left:601px;top:79px;width:112px;height:14px;background:#f0f0f0"></div>
<div class="v" style="left:603.25px;top:78px;height:16px;line-height:16px;letter-spacing:0.04px;">Status dokumentów</div>
<svg style="left:615px;top:122.5px" width="10" height="10" viewBox="0 0 10 10"><rect x="0.5" y="0.5" width="9" height="9" fill="none" stroke="#0b860b" stroke-opacity="0.75"/><path d="M2.3 5L4.2 7.2L7.8 2.6" fill="none" stroke="#0b860b" stroke-width="1"/></svg>
<div class="v" style="left:629.5px;top:120px;height:16px;line-height:16px;letter-spacing:-0.12px;color:#0b860b">Zlecenie od klienta</div>
<svg style="left:615px;top:159.5px" width="10" height="10" viewBox="0 0 10 10"><rect x="0.5" y="0.5" width="9" height="9" fill="none" stroke="#0b860b" stroke-opacity="0.75"/><path d="M2.3 5L4.2 7.2L7.8 2.6" fill="none" stroke="#0b860b" stroke-width="1"/></svg>
<div class="v" style="left:629.5px;top:157px;height:16px;line-height:16px;letter-spacing:-0.18px;color:#0b860b">Zlecenie do przewoźnika</div>
<svg style="left:615px;top:196.5px" width="10" height="10" viewBox="0 0 10 10"><rect x="0.5" y="0.5" width="9" height="9" fill="none" stroke="#0b860b" stroke-opacity="0.75"/><path d="M2.3 5L4.2 7.2L7.8 2.6" fill="none" stroke="#0b860b" stroke-width="1"/></svg>
<div class="v" style="left:629.5px;top:194px;height:16px;line-height:16px;letter-spacing:-0.15px;color:#0b860b">List przewozowy / CMR</div>
<svg style="left:615.5px;top:234.5px" width="8" height="8" viewBox="0 0 8 8"><rect x="0.5" y="0.5" width="7" height="7" fill="none" stroke="#f0141e"/></svg>
<div class="v" style="left:627.4px;top:231px;height:16px;line-height:16px;letter-spacing:-0.11px;color:#f0141e">Korespondencja z klientem</div>
<svg style="left:615.5px;top:271.5px" width="8" height="8" viewBox="0 0 8 8"><rect x="0.5" y="0.5" width="7" height="7" fill="none" stroke="#f0141e"/></svg>
<div class="v" style="left:627.4px;top:268px;height:16px;line-height:16px;letter-spacing:-0.16px;color:#f0141e">Korespondencja z przewoźnikiem</div>
<div class="a" style="left:853px;top:343px;width:2px;height:2px;background:#b4b4b4"></div>
<div class="a" style="left:850px;top:346px;width:2px;height:2px;background:#b4b4b4"></div>
<div class="a" style="left:853px;top:346px;width:2px;height:2px;background:#b4b4b4"></div>
<div class="a" style="left:847px;top:349px;width:2px;height:2px;background:#b4b4b4"></div>
<div class="a" style="left:850px;top:349px;width:2px;height:2px;background:#b4b4b4"></div>
<div class="a" style="left:853px;top:349px;width:2px;height:2px;background:#b4b4b4"></div>
</div>
</body></html>
